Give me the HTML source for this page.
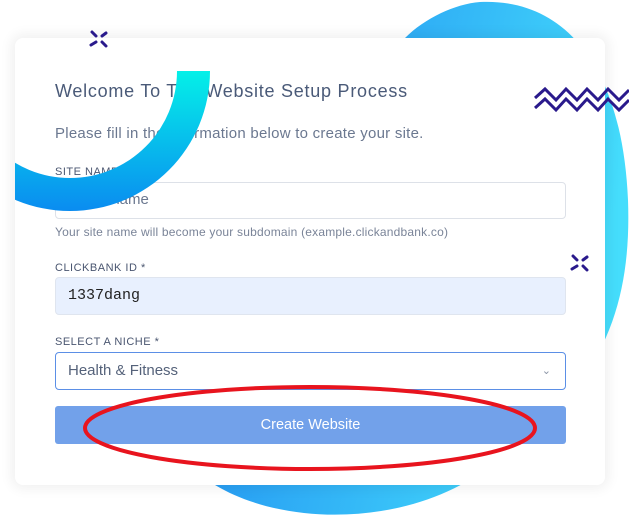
<!DOCTYPE html>
<html><head><meta charset="utf-8"><style>
body{margin:0;width:629px;height:523px;background:#fff;position:relative;overflow:hidden;font-family:"Liberation Sans",sans-serif;}
.card{position:absolute;left:15px;top:38px;width:590px;height:447px;background:#fff;border-radius:8px;box-shadow:0 0 12px 4px rgba(0,0,0,0.06);overflow:hidden;}
.t{position:absolute;white-space:nowrap;}
.inp{position:absolute;left:40px;width:511px;height:36px;border:1px solid #dde1e8;border-radius:4px;box-sizing:border-box;font-size:15px;color:#55627a;line-height:34px;padding-left:12px;}
.lbl{position:absolute;left:40px;font-size:11px;color:#4a5670;letter-spacing:0.5px;}
</style></head><body>
<svg width="629" height="523" style="position:absolute;left:0;top:0">
<defs><linearGradient id="b" x1="0" y1="0" x2="1" y2="0.3"><stop offset="0" stop-color="#1e88f0"/><stop offset="1" stop-color="#45ddfc"/></linearGradient></defs>
<path d="M480 2 C560 -2 622 60 628 200 C632 310 600 390 495 462 C420 525 290 530 215 485 L405 38 C425 18 455 4 480 2 Z" fill="url(#b)"/>
</svg>
<div class="card">
<div class="t" style="left:40px;top:43px;font-size:18px;color:#4a5a78;letter-spacing:0.75px">Welcome To The Website Setup Process</div>
<div class="t" style="left:40px;top:87px;font-size:15px;color:#6b7890;letter-spacing:0.25px">Please fill in the information below to create your site.</div>
<div class="lbl" style="top:128px">SITE NAME *</div>
<div class="inp" style="top:144px;height:37px;color:#6b7890">mysitename</div>
<div class="t" style="left:40px;top:187px;font-size:12px;color:#7a8498;letter-spacing:0.2px">Your site name will become your subdomain (example.clickandbank.co)</div>
<div class="lbl" style="top:224px">CLICKBANK ID *</div>
<div class="inp" style="top:239px;height:38px;background:#e8f0fe;border-color:#dfe5ef;color:#222;font-family:'Liberation Mono',monospace;font-size:15px;line-height:36px">1337dang</div>
<div class="lbl" style="top:298px">SELECT A NICHE *</div>
<div class="inp" style="top:314px;height:38px;border-color:#5b8fe6;line-height:36px">Health &amp; Fitness<span style="position:absolute;right:14px;top:0;color:#8a94a6;font-size:11px">&#8964;</span></div>
<div style="position:absolute;left:40px;top:368px;width:511px;height:38px;background:#72a1ea;border-radius:3px;color:#fff;font-size:14.5px;text-align:center;line-height:38px">Create Website</div>
</div>
<svg width="629" height="523" style="position:absolute;left:0;top:0">
<defs><linearGradient id="g" x1="0" y1="0" x2="0" y2="1"><stop offset="0" stop-color="#04f0e8"/><stop offset="1" stop-color="#0a8cf0"/></linearGradient>
<clipPath id="cp"><rect x="15" y="71" width="590" height="414"/></clipPath></defs>
<path clip-path="url(#cp)" d="M210 71 A140 140 0 0 1 -70 71 L-37 71 A107 107 0 0 0 177 71 Z" fill="url(#g)"/>
<g stroke="#2a1a8c" stroke-width="3" stroke-linecap="round">
<path d="M92 32 L96 36 M102 42 L106 46 M106 33 L102 36 M96 42 L91 45"/>
<path d="M573 256 L577 260 M583 266 L587 270 M587 257 L583 260 M577 266 L572 269"/>
</g>
<g fill="none" stroke="#2a1a8c" stroke-width="3">
<path d="M535 98 L545 89 L556 100 L566 89 L577 100 L587 89 L598 100 L608 89 L619 100 L629 90"/>
<path d="M535 108 L545 99 L556 110 L566 99 L577 110 L587 99 L598 110 L608 99 L619 110 L629 100"/>
</g>
<ellipse cx="310" cy="428" rx="225" ry="41" fill="none" stroke="#e8141e" stroke-width="4"/>
</svg>
</body></html>
